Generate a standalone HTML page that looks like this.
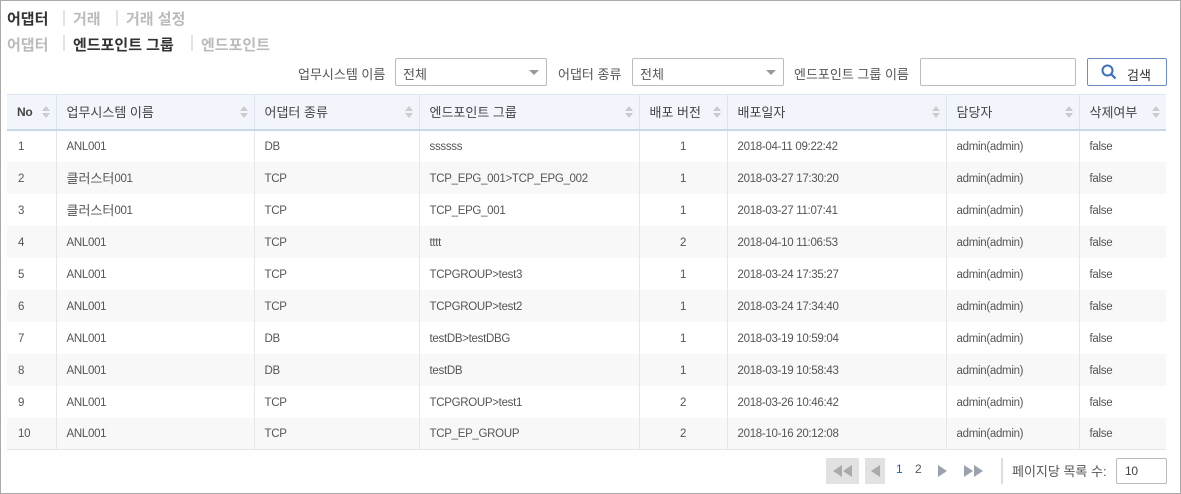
<!DOCTYPE html>
<html><head><meta charset="utf-8"><style>
*{box-sizing:border-box;margin:0;padding:0}
body{width:1181px;height:494px;background:#fff;font-family:"Liberation Sans","Noto Sans CJK KR",sans-serif;font-size:11.5px;letter-spacing:-0.3px;color:#555;position:relative;overflow:hidden}
.k{font-size:13px;letter-spacing:0}
.frame{position:absolute;left:0;top:0;width:1181px;height:494px;border:1px solid #aaa}
.t{position:absolute;white-space:nowrap}
.nav{font-size:15px;font-weight:bold;color:#bbb;letter-spacing:0}
.sep{position:absolute;width:2px;height:16px;background:#e3e3e3}
.sel{position:absolute;top:58px;height:28px;border:1px solid #bbb;border-radius:2px;padding:5px 7px;color:#555}
.arr:after{content:"";position:absolute;right:7px;top:11px;border-left:5px solid transparent;border-right:5px solid transparent;border-top:5px solid #999}
table{position:absolute;left:7px;top:94px;width:1159px;border-collapse:collapse;table-layout:fixed}
th{height:35px;background:#f2f5fb;border-top:1px solid #dce4f0;border-bottom:2px solid #c9d6ea;border-left:1px solid #dce4f0;text-align:left;padding-left:10px;font-weight:normal;color:#444;position:relative}
th:first-child{border-left:none}
th .s{position:absolute;right:6px;top:11px;width:8px;height:12px}
th .s:before{content:"";position:absolute;left:0;top:0;border-left:4px solid transparent;border-right:4px solid transparent;border-bottom:5px solid #ccc}
th .s:after{content:"";position:absolute;left:0;top:7px;border-left:4px solid transparent;border-right:4px solid transparent;border-top:5px solid #ccc}
td{height:32px;border-left:1px solid #e3e6ea;padding-left:10px;padding-top:2px;color:#555;line-height:14px}
td .k{line-height:14px;vertical-align:top}
td:first-child{border-left:none;padding-left:11px}
tr:nth-child(even) td{background:#f8f8f8}
tbody tr:last-child td{border-bottom:1px solid #e3e6ea}
.c{text-align:center;padding-left:0!important}
</style></head><body>
<div class="frame"></div>
<div class="t nav" style="left:7px;top:8px;color:#333">어댑터</div>
<div class="sep" style="left:63px;top:10px"></div>
<div class="t nav" style="left:73px;top:8px">거래</div>
<div class="sep" style="left:116px;top:10px"></div>
<div class="t nav" style="left:126px;top:8px">거래 설정</div>
<div class="t nav" style="left:7px;top:34px">어댑터</div>
<div class="sep" style="left:63px;top:35px"></div>
<div class="t nav" style="left:73px;top:34px;color:#333">엔드포인트 그룹</div>
<div class="sep" style="left:191px;top:35px"></div>
<div class="t nav" style="left:201px;top:34px">엔드포인트</div>
<div class="t k" style="left:298px;top:64px">업무시스템 이름</div>
<div class="sel arr k" style="left:395px;width:152px">전체</div>
<div class="t k" style="left:558px;top:64px">어댑터 종류</div>
<div class="sel arr k" style="left:632px;width:152px">전체</div>
<div class="t k" style="left:794px;top:64px">엔드포인트 그룹 이름</div>
<div class="sel" style="left:920px;width:156px"></div>
<div style="position:absolute;left:1087px;top:58px;width:80px;height:28px;border:1px solid #6a8fc6;border-radius:2px"></div>
<svg style="position:absolute;left:1101px;top:64px" width="16" height="16" viewBox="0 0 16 16"><circle cx="6.5" cy="6.5" r="5" fill="none" stroke="#3a6fc0" stroke-width="2"/><line x1="10" y1="10" x2="14.5" y2="14.5" stroke="#3a6fc0" stroke-width="2.2"/></svg>
<div class="t k" style="left:1127px;top:65px;color:#333">검색</div>
<table>
<colgroup><col style="width:49px"><col style="width:198px"><col style="width:165px"><col style="width:220px"><col style="width:88px"><col style="width:219px"><col style="width:133px"><col style="width:87px"></colgroup>
<thead><tr><th style="font-weight:bold;font-size:12px">No<span class="s"></span></th><th class="k">업무시스템 이름<span class="s"></span></th><th class="k">어댑터 종류<span class="s"></span></th><th class="k">엔드포인트 그룹<span class="s"></span></th><th class="k">배포 버전<span class="s"></span></th><th class="k">배포일자<span class="s"></span></th><th class="k">담당자<span class="s"></span></th><th class="k">삭제여부<span class="s"></span></th></tr></thead>
<tbody>
<tr><td>1</td><td>ANL001</td><td>DB</td><td>ssssss</td><td class="c">1</td><td>2018-04-11 09:22:42</td><td>admin(admin)</td><td>false</td></tr>
<tr><td>2</td><td><span class="k">클러스터</span>001</td><td>TCP</td><td>TCP_EPG_001&gt;TCP_EPG_002</td><td class="c">1</td><td>2018-03-27 17:30:20</td><td>admin(admin)</td><td>false</td></tr>
<tr><td>3</td><td><span class="k">클러스터</span>001</td><td>TCP</td><td>TCP_EPG_001</td><td class="c">1</td><td>2018-03-27 11:07:41</td><td>admin(admin)</td><td>false</td></tr>
<tr><td>4</td><td>ANL001</td><td>TCP</td><td>tttt</td><td class="c">2</td><td>2018-04-10 11:06:53</td><td>admin(admin)</td><td>false</td></tr>
<tr><td>5</td><td>ANL001</td><td>TCP</td><td>TCPGROUP&gt;test3</td><td class="c">1</td><td>2018-03-24 17:35:27</td><td>admin(admin)</td><td>false</td></tr>
<tr><td>6</td><td>ANL001</td><td>TCP</td><td>TCPGROUP&gt;test2</td><td class="c">1</td><td>2018-03-24 17:34:40</td><td>admin(admin)</td><td>false</td></tr>
<tr><td>7</td><td>ANL001</td><td>DB</td><td>testDB&gt;testDBG</td><td class="c">1</td><td>2018-03-19 10:59:04</td><td>admin(admin)</td><td>false</td></tr>
<tr><td>8</td><td>ANL001</td><td>DB</td><td>testDB</td><td class="c">1</td><td>2018-03-19 10:58:43</td><td>admin(admin)</td><td>false</td></tr>
<tr><td>9</td><td>ANL001</td><td>TCP</td><td>TCPGROUP&gt;test1</td><td class="c">2</td><td>2018-03-26 10:46:42</td><td>admin(admin)</td><td>false</td></tr>
<tr><td>10</td><td>ANL001</td><td>TCP</td><td>TCP_EP_GROUP</td><td class="c">2</td><td>2018-10-16 20:12:08</td><td>admin(admin)</td><td>false</td></tr>
</tbody></table>
<div style="position:absolute;left:826px;top:458px;width:33px;height:26px;background:#e2e2e2"></div>
<svg style="position:absolute;left:830px;top:464px" width="26" height="14"><polygon points="12,1 12,13 3,7" fill="#aaa"/><polygon points="22,1 22,13 13,7" fill="#aaa"/></svg>
<div style="position:absolute;left:865px;top:458px;width:20px;height:26px;background:#e2e2e2"></div>
<svg style="position:absolute;left:869px;top:464px" width="14" height="14"><polygon points="11,1 11,13 2,7" fill="#aaa"/></svg>
<div class="t" style="left:896px;top:462px;color:#2a5bb8;font-size:12px">1</div>
<div class="t" style="left:915px;top:462px;font-size:12px">2</div>
<svg style="position:absolute;left:936px;top:464px" width="14" height="14"><polygon points="2,1 2,13 11,7" fill="#9aa3ad"/></svg>
<svg style="position:absolute;left:962px;top:464px" width="26" height="14"><polygon points="2,1 2,13 11,7" fill="#9aa3ad"/><polygon points="12,1 12,13 21,7" fill="#9aa3ad"/></svg>
<div style="position:absolute;left:1001px;top:458px;width:2px;height:26px;background:#ddd"></div>
<div class="t k" style="left:1012px;top:461px">페이지당 목록 수:</div>
<div style="position:absolute;left:1116px;top:458px;width:51px;height:26px;border:1px solid #bbb;border-radius:2px;padding:5px 8px;color:#444;font-size:12px">10</div>
</body></html>
